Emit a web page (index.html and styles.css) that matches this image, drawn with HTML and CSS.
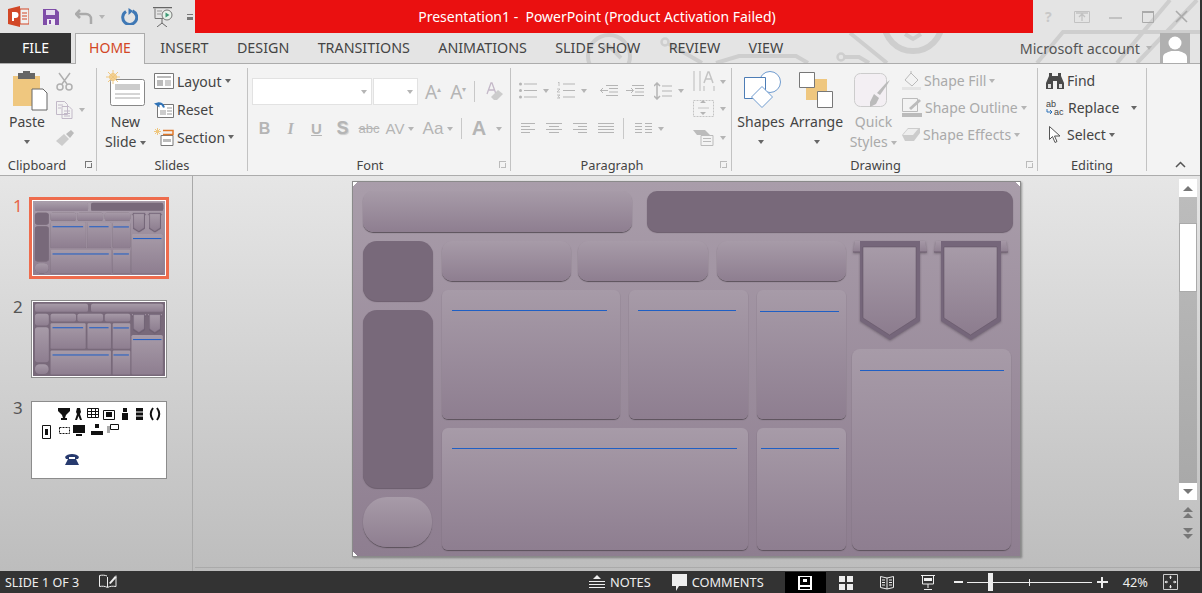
FILE: index.html
```html
<!DOCTYPE html>
<html lang="en">
<head>
  <meta charset="UTF-8" />
  <title>Presentation1 - PowerPoint</title>
  <link rel="stylesheet" href="styles.css">
</head>
<body>
  <!-- Shared shapes -->
  <svg class="defs" aria-hidden="true">
    <defs>
      <linearGradient id="bannerFill" x1="0" y1="0" x2="0" y2="1">
        <stop offset="0" stop-color="#a79ba8" />
        <stop offset="1" stop-color="#8c7c8e" />
      </linearGradient>
      <linearGradient id="earFill" x1="0" y1="0" x2="0" y2="1">
        <stop offset="0" stop-color="#a598a6" />
        <stop offset="1" stop-color="#8f8091" />
      </linearGradient>
      <symbol id="banner" viewBox="0 0 74 100">
        <path d="M2 0h70l2 11H0z" fill="url(#earFill)" />
        <path d="M0 10.500h74v1H0z" fill="#6e5f70" />
        <path d="M7 0h60v80L37 99 7 80z" fill="#75667a" />
        <path d="M10 6h53v71L36.500 94 10 77z" fill="url(#bannerFill)" stroke="#5f5161" stroke-width=".5" />
      </symbol>
    </defs>
  </svg>

  <div class="app">
    <!-- Circuit board pattern behind title bar and tabs -->
    <svg class="circuit" width="1202" height="63" viewBox="0 0 1202 63" aria-hidden="true">
      <g fill="none" stroke="#cecece" stroke-width="4">
        <circle cx="609" cy="56" r="21" />
        <path d="M601 50l7-5 13 13" />
        <circle cx="913" cy="22" r="29" stroke-width="6" />
        <path d="M905 34l8 5 8-5" />
        <circle cx="665" cy="42" r="3.500" stroke-width="2.500" />
        <path d="M669 44l33 19M716 63l23-7h57l12 7M845 57h14l10 6M850 33l37 30" />
        <circle cx="841" cy="57" r="3.500" stroke-width="2.500" />
        <path d="M1037 63l26-31h137M1117 63l53-63M1137 63l60-63" />
      </g>
    </svg>

    <!-- Title bar -->
    <header class="titlebar">
      <div class="qat">
        <svg class="qat-logo" width="21" height="21" viewBox="0 0 21 21">
          <path d="M0 3l12-3v21L0 18z" fill="#d24726" />
          <path d="M12 3h9v15h-9z" fill="#f0f0f0" stroke="#d24726" />
          <path d="M4 6h3.500a2.500 2.500 0 010 6H6v3H4z" fill="#fff" />
          <path d="M14 7h5M14 10h5M14 13h5" stroke="#d24726" />
        </svg>
        <svg class="qat-save" width="16" height="16" viewBox="0 0 16 16">
          <path d="M0 0h13l3 3v13H0z" fill="#7f4da8" />
          <path d="M3 1h9v5H3z" fill="#e5dcee" />
          <path d="M4 10h8v6H4z" fill="#efe9f4" />
          <path d="M6 11h2v4H6z" fill="#7f4da8" />
        </svg>
        <svg class="qat-undo" width="19" height="16" viewBox="0 0 19 16">
          <path d="M5 1L1 5l4 4M1 5h10a5 5 0 015 5v5" fill="none" stroke="#aaa" stroke-width="2.500" />
        </svg>
        <span class="caret caret-pale"></span>
        <svg class="qat-redo" width="17" height="17" viewBox="0 0 17 17">
          <path d="M5 3.500a7 7 0 106.500-.5" fill="none" stroke="#3f78b5" stroke-width="3" />
          <path d="M7.500 0v7L12 3z" fill="#3f78b5" />
        </svg>
        <svg class="qat-show" width="20" height="20" viewBox="0 0 20 20">
          <path d="M0 .500h19" stroke="#666" stroke-width="1.500" />
          <path d="M2 1.500v10h10" fill="none" stroke="#777" />
          <path d="M4 4h5M4 7h4" stroke="#999" />
          <circle cx="14" cy="8" r="5" fill="#e8f2ea" stroke="#777" />
          <path d="M12.500 5.500l4 2.500-4 2.500z" fill="#3d9a77" />
          <path d="M9 12v4M4 20l5-4 5 4" fill="none" stroke="#666" />
        </svg>
        <span class="qat-more"></span>
      </div>
      <div class="title-text">Presentation1 -  PowerPoint (Product Activation Failed)</div>
      <div class="window-buttons">
        <span class="win-help">?</span>
        <svg width="16" height="12" viewBox="0 0 16 12">
          <path d="M.500.500h15v11H.500z" fill="none" stroke="#c2c2c2" />
          <path d="M8 10V3M5 6l3-3 3 3M2 2h12" fill="none" stroke="#c2c2c2" stroke-width="1.300" />
        </svg>
        <svg width="13" height="3" viewBox="0 0 13 3"><path d="M0 1h13" stroke="#c2c2c2" stroke-width="2" /></svg>
        <svg width="12" height="12" viewBox="0 0 12 12">
          <path d="M.500 1.500h11v10H.500z" fill="none" stroke="#aaa" />
          <path d="M0 1h12" stroke="#aaa" stroke-width="2" />
        </svg>
        <svg width="13" height="13" viewBox="0 0 13 13"><path d="M1 1l11 11M12 1L1 12" stroke="#aaa" stroke-width="1.600" /></svg>
      </div>
    </header>

    <!-- Ribbon tabs -->
    <nav class="tabs">
      <a class="tab-file">FILE</a>
      <a class="tab tab-active">HOME</a>
      <a class="tab">INSERT</a>
      <a class="tab">DESIGN</a>
      <a class="tab">TRANSITIONS</a>
      <a class="tab">ANIMATIONS</a>
      <a class="tab">SLIDE SHOW</a>
      <a class="tab">REVIEW</a>
      <a class="tab">VIEW</a>
      <div class="account">
        <span>Microsoft account</span>
        <span class="caret caret-pale"></span>
        <svg class="avatar" width="30" height="30" viewBox="0 0 30 30">
          <path d="M0 0h30v30H0z" fill="#b0b0b0" />
          <circle cx="15" cy="10" r="6.500" fill="#fff" />
          <path d="M3 30v-6c0-4 6-5 8-6h8c2 1 8 2 8 6v6z" fill="#fff" />
        </svg>
      </div>
    </nav>

    <!-- Ribbon -->
    <section class="ribbon">
      <div class="group group-clipboard">
        <div class="group-body">
          <div class="big-button big-paste">
            <svg class="big-icon" width="35" height="40" viewBox="0 0 35 40">
              <path d="M0 5h27v30H0z" fill="#efc77f" />
              <path d="M5 2h5V0h7v2h5v6H5z" fill="#666" />
              <path d="M19 18h11l4 4v17H19z" fill="#fff" stroke="#666" />
            </svg>
            <span>Paste</span>
            <span class="caret"></span>
          </div>
          <div class="clip-tools">
            <svg width="17" height="19" viewBox="0 0 17 19">
              <path d="M3 1l8 11M14 1L6 12" stroke="#b0b0b0" stroke-width="1.500" />
              <circle cx="4" cy="15" r="3" fill="none" stroke="#b0b0b0" stroke-width="1.500" />
              <circle cx="13" cy="15" r="3" fill="none" stroke="#b0b0b0" stroke-width="1.500" />
            </svg>
            <div class="clip-copy">
              <svg width="17" height="18" viewBox="0 0 17 18">
                <path d="M.500.500h8l3 3v10H.500zM6 5.500h7l3 3v9H6z" fill="#f3f3f3" stroke="#c2b9c8" />
                <path d="M8 10h6M8 12.500h6M8 15h6M2 4h5M2 7h3" stroke="#c2b9c8" />
              </svg>
              <span class="caret caret-pale"></span>
            </div>
            <svg width="18" height="16" viewBox="0 0 18 16">
              <path d="M0 11l8-7 5 5-7 7z" fill="#ccc" />
              <path d="M10 4l5-4 3 3-4 5z" fill="#bbb" />
            </svg>
          </div>
        </div>
        <div class="group-label">Clipboard<span class="launcher launcher-dark"></span></div>
      </div>

      <div class="group group-slides">
        <div class="group-body">
          <div class="big-button big-new">
            <svg class="big-icon" width="39" height="36" viewBox="0 0 39 36">
              <rect x="4.500" y="9.500" width="34" height="26" rx="2" fill="#fff" stroke="#888" />
              <path d="M9 14h25v6H9z" fill="#ccc" />
              <path d="M9 24h25M9 28h25" stroke="#aaa" />
              <circle cx="7" cy="7" r="3.500" fill="#f7d9a4" stroke="#efc77f" />
              <path d="M7 0v14M0 7h14M2 2l10 10M12 2L2 12" stroke="#efc77f" />
            </svg>
            <span>New</span>
            <span>Slide <i class="caret"></i></span>
          </div>
          <div class="small-list small-list-wide">
            <div class="small-row">
              <svg width="20" height="16" viewBox="0 0 20 16">
                <path d="M.500.500h19v15H.500z" fill="#fff" stroke="#777" />
                <path d="M3 3h14v2H3zM3 7h6v6H3z" fill="#bbb" />
                <path d="M11 8h6M11 10h6M11 12h6" stroke="#999" />
              </svg>
              <span>Layout</span><i class="caret"></i>
            </div>
            <div class="small-row">
              <svg width="20" height="17" viewBox="0 0 20 17">
                <path d="M3.500 3.500h16v13h-16z" fill="#fff" stroke="#777" />
                <path d="M6 9h6v5H6z" fill="#ccc" />
                <path d="M13 7h5M13 10h5M13 13h5" stroke="#999" />
                <path d="M10 6.500C8 1 5 2 3.500 4" fill="none" stroke="#2f73b8" stroke-width="2" />
                <path d="M0 2.500l5.500 4V1z" fill="#2f73b8" />
              </svg>
              <span>Reset</span>
            </div>
            <div class="small-row">
              <svg width="20" height="19" viewBox="0 0 20 19">
                <path d="M7 7.500h12v10H7z" fill="#fff" stroke="#777" />
                <path d="M9 11h8v3H9z" fill="#bbb" />
                <path d="M9 2.500h10v4H9" fill="none" stroke="#e07a2c" stroke-width="1.500" />
                <path d="M3.500 0v7M0 3.500h7M1 1l5 5M6 1L1 6" stroke="#efc77f" />
              </svg>
              <span>Section</span><i class="caret"></i>
            </div>
          </div>
        </div>
        <div class="group-label">Slides</div>
      </div>

      <div class="group group-font">
        <div class="group-body group-stack">
          <div class="font-row">
            <div class="combo combo-name"><i class="caret caret-pale"></i></div>
            <div class="combo combo-size"><i class="caret caret-pale"></i></div>
            <span class="glyph glyph-grow">A<sup>▴</sup></span>
            <span class="glyph glyph-shrink">A<sup>▾</sup></span>
            <span class="tool-sep"></span>
            <svg class="font-clear" width="17" height="19" viewBox="0 0 17 19">
              <path d="M1 12L5 1h1l4 11M3 8h5" fill="none" stroke="#c4b8c8" stroke-width="1.300" />
              <path d="M5 15l7-7 5 4-6 6H8z" fill="#ccc" />
            </svg>
          </div>
          <div class="font-row font-row-two">
            <b class="fmt fmt-b">B</b>
            <i class="fmt fmt-i">I</i>
            <u class="fmt fmt-u">U</u>
            <b class="fmt fmt-s">S</b>
            <s class="fmt fmt-abc">abc</s>
            <span class="fmt fmt-av">AV</span><i class="caret caret-pale"></i>
            <span class="fmt fmt-aa">Aa</span><i class="caret caret-pale"></i>
            <span class="tool-sep tool-sep-b"></span>
            <b class="fmt fmt-a">A</b><i class="caret caret-pale caret-a"></i>
          </div>
        </div>
        <div class="group-label">Font<span class="launcher"></span></div>
      </div>

      <div class="group group-paragraph">
        <div class="group-body">
          <div class="para-left">
            <div class="para-row">
              <svg width="18" height="17" viewBox="0 0 18 17">
                <path d="M5 2h13M5 8.500h13M5 15h13" stroke="#b5b5b5" />
                <circle cx="1.500" cy="2" r="1.500" fill="#b5b5b5" /><circle cx="1.500" cy="8.500" r="1.500" fill="#b5b5b5" /><circle cx="1.500" cy="15" r="1.500" fill="#b5b5b5" />
              </svg>
              <i class="caret caret-pale"></i>
              <svg class="para-num" width="18" height="17" viewBox="0 0 18 17">
                <path d="M6 2h12M6 8.500h12M6 15h12" stroke="#b5b5b5" />
                <path d="M1 1l1-1v4M0 7h3L0 10h3M0 13h3L1 14.500 3 16H0" fill="none" stroke="#b5b5b5" stroke-width=".8" />
              </svg>
              <i class="caret caret-pale"></i>
              <svg class="para-indent" width="18" height="11" viewBox="0 0 18 11">
                <path d="M6 .500h12M9 3.500h9M9 7h9M6 10.500h12M0 5.500h8M3 3L.500 5.500 3 8" fill="none" stroke="#b5b5b5" />
              </svg>
              <svg class="para-indent2" width="18" height="11" viewBox="0 0 18 11">
                <path d="M6 .500h12M9 3.500h9M9 7h9M6 10.500h12M0 5.500h7M5 3l2.500 2.500L5 8" fill="none" stroke="#b5b5b5" />
              </svg>
              <svg class="para-spacing" width="18" height="18" viewBox="0 0 18 18">
                <path d="M3 1v16M0 4l3-3 3 3M0 14l3 3 3-3" fill="none" stroke="#b5b5b5" stroke-width="1.500" />
                <path d="M8 4h10M8 9h10M8 14h10" stroke="#b5b5b5" />
              </svg>
              <i class="caret caret-pale"></i>
            </div>
            <div class="para-row para-row-two">
              <svg width="14" height="11" viewBox="0 0 14 11"><path d="M0 .500h14M0 3.500h9M0 6.500h14M0 9.500h9" stroke="#b5b5b5" /></svg>
              <svg width="16" height="11" viewBox="0 0 16 11"><path d="M0 .500h16M3 3.500h10M0 6.500h16M3 9.500h10" stroke="#b5b5b5" /></svg>
              <svg width="14" height="11" viewBox="0 0 14 11"><path d="M0 .500h14M5 3.500h9M0 6.500h14M5 9.500h9" stroke="#b5b5b5" /></svg>
              <svg width="16" height="11" viewBox="0 0 16 11"><path d="M0 .500h16M0 3.500h16M0 6.500h16M0 9.500h16" stroke="#b5b5b5" /></svg>
              <span class="tool-sep tool-sep-p"></span>
              <svg width="17" height="11" viewBox="0 0 17 11"><path d="M0 .500h7M0 3.500h7M0 6.500h7M0 9.500h7M10 .500h7M10 3.500h7M10 6.500h7M10 9.500h7" stroke="#b5b5b5" /></svg>
              <i class="caret caret-pale"></i>
            </div>
          </div>
          <div class="para-right">
            <div class="para-cell">
              <svg width="27" height="21" viewBox="0 0 27 21">
                <path d="M1 0v20M7 0v20M11 15v5M21 15v5" stroke="#bbb" />
                <path d="M11 12l4-11h1l4 11M12.500 8h6" fill="none" stroke="#c4c4c4" stroke-width="1.500" />
              </svg>
              <i class="caret caret-pale"></i>
            </div>
            <div class="para-cell">
              <svg width="27" height="17" viewBox="0 0 27 17">
                <path d="M.500.500h20v16H.500z" fill="none" stroke="#c4c4c4" stroke-dasharray="2 1" />
                <path d="M5 8h11" stroke="#c4c4c4" /><path d="M7 3l3-3 3 3zM7 12l3 3 3-3z" fill="#b5b5b5" />
              </svg>
              <i class="caret caret-pale"></i>
            </div>
            <div class="para-cell">
              <svg width="27" height="16" viewBox="0 0 27 16">
                <path d="M0 0h12l5 5H4z" fill="#bbb" />
                <path d="M8 5.500h12v10H8z" fill="#f3f3f3" stroke="#bbb" />
                <path d="M10 8.500h8M10 11.500h8" stroke="#bbb" />
              </svg>
              <i class="caret caret-pale"></i>
            </div>
          </div>
        </div>
        <div class="group-label">Paragraph<span class="launcher"></span></div>
      </div>

      <div class="group group-drawing">
        <div class="group-body">
          <div class="big-button big-shapes">
            <svg class="big-icon" width="38" height="37" viewBox="0 0 38 37">
              <circle cx="26" cy="11" r="10.500" fill="#fff" stroke="#6f9bcf" />
              <path d="M.500 6.500h21v21H.500z" fill="#fff" stroke="#4d7db6" />
              <path d="M18 15.500l10.500 10.500L18 36.500 7.500 26z" fill="#fff" stroke="#6f9bcf" />
            </svg>
            <span>Shapes</span>
            <span class="caret"></span>
          </div>
          <div class="big-button big-arrange">
            <svg class="big-icon" width="36" height="36" viewBox="0 0 36 36">
              <path d="M7 7h21v21H7z" fill="#efc77f" />
              <path d="M.500.500h15v15H.500zM18.500 19.500h15v16h-15z" fill="#fff" stroke="#777" />
            </svg>
            <span>Arrange</span>
            <span class="caret"></span>
          </div>
          <div class="big-button big-quick big-off">
            <svg class="big-icon" width="40" height="37" viewBox="0 0 40 37">
              <rect x=".500" y=".500" width="32" height="33" rx="6" fill="#f3eff3" stroke="#ccc" />
              <path d="M16 29l4-8 5 4-3 6-6 3z" fill="#bbb" />
              <path d="M23 20l9-10 4-3-3 5-7 10z" fill="#bbb" />
            </svg>
            <span>Quick</span>
            <span>Styles <i class="caret caret-pale"></i></span>
          </div>
          <div class="small-list small-list-off">
            <div class="small-row">
              <svg width="19" height="19" viewBox="0 0 19 19">
                <path d="M3 9l6-7 7 7-6 6z" fill="#f3f3f3" stroke="#bbb" />
                <path d="M9 2V0" stroke="#bbb" /><path d="M0 16h19v3H0z" fill="#e4e4e4" />
              </svg>
              <span>Shape Fill</span><i class="caret caret-pale"></i>
            </div>
            <div class="small-row">
              <svg width="20" height="19" viewBox="0 0 20 19">
                <path d="M.500.500h15v13H.500z" fill="#f3f3f3" stroke="#bbb" />
                <path d="M7 10L17 1l2 2-10 9z" fill="#bbb" /><path d="M0 15h20v4H0z" fill="#bbb" />
              </svg>
              <span>Shape Outline</span><i class="caret caret-pale"></i>
            </div>
            <div class="small-row">
              <svg width="18" height="15" viewBox="0 0 18 15">
                <path d="M0 8l6-7h12v5l-6 8H3z" fill="#ccc" /><path d="M1 8l5-6h10l-5 6z" fill="#eee" />
              </svg>
              <span>Shape Effects</span><i class="caret caret-pale"></i>
            </div>
          </div>
        </div>
        <div class="group-label">Drawing<span class="launcher"></span></div>
      </div>

      <div class="group group-editing">
        <div class="group-body">
          <div class="small-list">
            <div class="small-row">
              <svg width="18" height="16" viewBox="0 0 18 16">
                <path d="M3 0h3v3h6V0h3v3l3 7v6h-7V8H7v8H0v-6l3-7z" fill="#4a4a4a" />
                <path d="M2 11h3v4H2zM13 11h3v4h-3z" fill="#ddd" />
              </svg>
              <span>Find</span>
            </div>
            <div class="small-row">
              <svg width="19" height="16" viewBox="0 0 19 16">
                <text x="0" y="7" class="replace-ab">ab</text>
                <text x="8" y="15" class="replace-ac">ac</text>
                <path d="M1 9v3h5M4 10l2 2-2 2" fill="none" stroke="#2f73b8" />
              </svg>
              <span>Replace</span><i class="caret caret-replace"></i>
            </div>
            <div class="small-row">
              <svg class="select-icon" width="12" height="17" viewBox="0 0 12 17">
                <path d="M.500.500v13l3-3 2.500 6 2-1-2.500-5.500H11z" fill="#fff" stroke="#555" />
              </svg>
              <span>Select</span><i class="caret"></i>
            </div>
          </div>
        </div>
        <div class="group-label">Editing</div>
      </div>

      <svg class="ribbon-collapse" width="11" height="7" viewBox="0 0 11 7"><path d="M1 6l4.500-4.500L10 6" fill="none" stroke="#555" stroke-width="1.500" /></svg>
    </section>

    <main class="workspace">
      <!-- Slide thumbnails -->
      <aside class="thumbs">
        <div class="thumb-row thumb-current">
          <span class="thumb-num">1</span>
          <div class="thumb-frame">
            <div class="thumb-view">
              <div class="slide">
                <div class="shape top-a"></div><div class="shape dark top-b"></div>
                <div class="shape dark side-a"></div><div class="shape dark side-b"></div><div class="shape pill"></div>
                <div class="shape head-a"></div><div class="shape head-b"></div><div class="shape head-c"></div>
                <div class="shape card-a"><hr></div><div class="shape card-b"><hr></div><div class="shape card-c"><hr></div>
                <div class="shape card-d"><hr></div><div class="shape card-e"><hr></div><div class="shape card-f"><hr></div>
                <svg class="banner banner-a"><use href="#banner" /></svg><svg class="banner banner-b"><use href="#banner" /></svg>
              </div>
            </div>
          </div>
        </div>
        <div class="thumb-row">
          <span class="thumb-num">2</span>
          <div class="thumb-frame">
            <div class="thumb-view">
              <div class="slide slide-alt">
                <div class="shape top-a"></div><div class="shape top-b"></div>
                <div class="shape side-a"></div><div class="shape side-b"></div><div class="shape pill"></div>
                <div class="shape head-a"></div><div class="shape head-b"></div><div class="shape head-c"></div>
                <div class="shape card-a"><hr></div><div class="shape card-b"><hr></div><div class="shape card-c"><hr></div>
                <div class="shape card-d"><hr></div><div class="shape card-e"><hr></div><div class="shape card-f"><hr></div>
                <svg class="banner banner-a"><use href="#banner" /></svg><svg class="banner banner-b"><use href="#banner" /></svg>
              </div>
            </div>
          </div>
        </div>
        <div class="thumb-row">
          <span class="thumb-num">3</span>
          <div class="thumb-frame">
            <svg class="thumb-icons" width="134" height="76" viewBox="0 0 134 76">
              <g fill="#111">
                <path d="M26 6h12v3l-4 4-1 3h2v2h-6v-2h2l-1-3-4-4z" />
                <path d="M45 6h3l1 4-1 2 2 6-2 0-1.500-4-1.500 4-2 0 2-6-1-2z" />
                <path d="M55.500 6.500h11v9h-11z" fill="#fff" stroke="#111" /><path d="M55 9.500h11M55 12.500h11M59.500 6v9M63.500 6v9" stroke="#111" />
                <path d="M71.500 8.500h11v9h-11z" fill="#fff" stroke="#111" /><path d="M74 10h6v5h-6z" />
                <path d="M90 11h6v7h-6zM91 6h4v4h-4z" />
                <path d="M104 6h7v12h-7z" /><path d="M104 10h7M104 14h7" stroke="#fff" />
                <path d="M121 6c-3 4-3 8 0 12M125 6c3 4 3 8 0 12" fill="none" stroke="#111" stroke-width="2" />
                <path d="M10.500 23.500h8v13h-8z" fill="#fff" stroke="#111" /><path d="M13 27h3v6h-3z" />
                <path d="M27.500 25.500h10v6h-10z" fill="#fff" stroke="#111" stroke-dasharray="2 1" />
                <path d="M41 23h12v8H41zM44 32h6v2h-6z" />
                <path d="M63 22h4v4h-4zM59 29h4v4h-4zM63 29h4v4h-4zM67 29h4v4h-4z" />
                <path d="M78.500 22.500h8v5h-8z" fill="#fff" stroke="#111" /><path d="M75 24h3v7h-3z" fill="#aaa" />
                <path d="M33 55c2-4 12-4 14 0l-1 2h-3v-2h-6v2h-3zM36 57h8l3 6H33z" fill="#273a6e" />
              </g>
            </svg>
          </div>
        </div>
      </aside>

      <div class="stage">
        <div class="canvas">
          <div class="slide">
            <div class="shape top-a"></div><div class="shape dark top-b"></div>
            <div class="shape dark side-a"></div><div class="shape dark side-b"></div><div class="shape pill"></div>
            <div class="shape head-a"></div><div class="shape head-b"></div><div class="shape head-c"></div>
            <div class="shape card-a"><hr></div><div class="shape card-b"><hr></div><div class="shape card-c"><hr></div>
            <div class="shape card-d"><hr></div><div class="shape card-e"><hr></div><div class="shape card-f"><hr></div>
            <svg class="banner banner-a"><use href="#banner" /></svg><svg class="banner banner-b"><use href="#banner" /></svg>
          </div>
        </div>

        <div class="scrollbar">
          <div class="scroll-btn"><span class="arrow-up"></span></div>
          <div class="scroll-track">
            <div class="scroll-thumb"></div>
          </div>
          <div class="scroll-btn scroll-btn-down"><span class="arrow-down"></span></div>
          <div class="scroll-page">
            <span class="arrow-up"></span><span class="arrow-up arrow-tuck"></span>
          </div>
          <div class="scroll-page">
            <span class="arrow-down"></span><span class="arrow-down arrow-tuck"></span>
          </div>
        </div>
      </div>
    </main>

    <!-- Status bar -->
    <footer class="statusbar">
      <span class="status-count">SLIDE 1 OF 3</span>
      <svg class="status-spell" width="18" height="16" viewBox="0 0 18 16">
        <path d="M8 2C6 1 3 1 .500 1.500v11C3 12 6 12 8.500 13.500 11 12 14 12 17 12.500V1.500" fill="none" stroke="#eee" />
        <path d="M8.500 3v10" stroke="#eee" /><path d="M10 9l6-7 1.500 1.500-6 6.500z" fill="#eee" />
      </svg>
      <div class="status-right">
        <span class="status-item">
          <svg width="16" height="14" viewBox="0 0 16 14">
            <path d="M8 0l4 4H4z" fill="#eee" /><path d="M0 6.500h16M0 9.500h16M0 12.500h16" stroke="#eee" />
          </svg>NOTES</span>
        <span class="status-item status-comments">
          <svg width="15" height="17" viewBox="0 0 15 17"><path d="M0 0h15v12H7l-3 5v-5H0z" fill="#eee" /></svg>COMMENTS</span>
        <span class="view-btn view-active">
          <svg width="14" height="14" viewBox="0 0 14 14"><path fill-rule="evenodd" d="M0 0h14v14H0zM2 1v8h10V1zM2 11v2h10v-2z" fill="#fff" /><path d="M5 3h4v3H5z" fill="#fff" /></svg>
        </span>
        <span class="view-btn">
          <svg width="14" height="14" viewBox="0 0 14 14"><path d="M0 0h6v6H0zM8 0h6v6H8zM0 8h6v6H0zM8 8h6v6H8z" fill="#eee" /></svg>
        </span>
        <span class="view-btn">
          <svg width="14" height="15" viewBox="0 0 14 15"><path d="M.500 1.500L7 3l6.500-1.500v11L7 14 .500 12.500z" fill="none" stroke="#eee" /><path d="M7 3v11M2 5h3M2 7.500h3M2 10h3M9 5h3M9 7.500h3M9 10h3" stroke="#eee" /></svg>
        </span>
        <span class="view-btn">
          <svg width="14" height="15" viewBox="0 0 14 15"><path d="M0 .500h14M1.500 1v8h11V1M7 9v4M3 14.500h8" fill="none" stroke="#eee" /><path d="M3 3h8v3H3z" fill="#eee" /></svg>
        </span>
        <span class="zoom-minus"></span>
        <div class="zoom-slider"><span class="zoom-tick"></span><span class="zoom-knob"></span></div>
        <span class="zoom-plus"></span>
        <span class="zoom-value">42%</span>
        <svg class="zoom-fit" width="15" height="16" viewBox="0 0 15 16">
          <path d="M.500.500h14v15H.500z" fill="none" stroke="#ccc" />
          <path d="M7.500 2v3M7.500 11v3M2 8h3M10 8h3" stroke="#eee" />
          <path d="M6 3.500l1.500-2 1.500 2zM6 12.500l1.500 2 1.500-2zM3.500 6.500l-2 1.500 2 1.500zM11.500 6.500l2 1.500-2 1.500z" fill="#eee" />
        </svg>
      </div>
    </footer>
  </div>
</body>
</html>
```
FILE: styles.css
```css
/* Reset */
* {
  box-sizing: border-box;
  margin: 0;
  padding: 0;
}

body {
  width: 1202px;
  height: 593px;
  overflow: hidden;
  font-family: "Noto Sans", "Open Sans", sans-serif;
  font-size: 14px;
  color: #444;
  background: #e4e4e4;
}

.defs {
  position: absolute;
  width: 0;
  height: 0;
}

.app {
  position: relative;
  display: flex;
  flex-direction: column;
  height: 593px;
  border-right: 2px solid #333;
  background: #e4e4e4;
}

.circuit {
  position: absolute;
  top: 0;
  left: 0;
}

/* Shared bits */
.caret {
  display: inline-block;
  width: 0;
  height: 0;
  border-left: 3.5px solid transparent;
  border-right: 3.5px solid transparent;
  border-top: 4px solid #666;
  vertical-align: middle;
}

.caret-pale {
  border-top-color: #b5b5b5;
}

svg {
  display: block;
  flex: none;
}

/* Title bar */
.titlebar {
  position: relative;
  display: flex;
  height: 33px;
}

.qat {
  display: flex;
  align-items: center;
  width: 195px;
  padding-left: 8px;
}

.qat-save {
  margin-left: 14px;
}

.qat-undo {
  margin-left: 16px;
}

.qat .caret {
  margin-left: 5px;
  border-left-width: 3px;
  border-right-width: 3px;
}

.qat-redo {
  margin-left: 16px;
}

.qat-show {
  margin-left: 15px;
}

.qat-more {
  width: 6px;
  height: 6px;
  margin-left: 14px;
  border-top: 1px solid #777;
  border-bottom: 3px solid #777;
}

.title-text {
  flex: 0 0 838px;
  padding-top: 6px;
  padding-right: 34px;
  background: #ea1010;
  color: #fff;
  font-size: 14px;
  line-height: 21px;
  text-align: center;
  white-space: pre;
}

.window-buttons {
  display: flex;
  align-items: center;
  height: 33px;
  padding-left: 12px;
}

.window-buttons svg:nth-child(2) {
  margin-left: 22px;
}

.window-buttons svg:nth-child(3) {
  margin-left: 19px;
  margin-top: 4px;
}

.window-buttons svg:nth-child(4) {
  margin-left: 20px;
}

.window-buttons svg:nth-child(5) {
  margin-left: 21px;
}

.win-help {
  color: #c8c8c8;
  font-size: 14px;
  font-weight: 700;
}

/* Tabs */
.tabs {
  position: relative;
  display: flex;
  align-items: stretch;
  height: 31px;
  border-bottom: 1px solid #acacac;
  font-size: 14.3px;
}

.tab-file {
  width: 71px;
  margin-right: 4px;
  background: #333;
  color: #fff;
  font-size: 14px;
  line-height: 30px;
  text-align: center;
}

.tab {
  padding: 0 14.2px;
  color: #444;
  line-height: 30px;
}

.tab-active {
  width: 70px;
  height: 31px;
  padding: 0;
  margin-right: 1px;
  border: 1px solid #acacac;
  border-bottom: 0;
  background: #f3f3f3;
  color: #d24726;
  font-size: 14px;
  line-height: 28px;
  text-align: center;
}

.account {
  display: flex;
  align-items: center;
  gap: 6px;
  margin-left: auto;
  margin-right: 10px;
  color: #555;
}

.avatar {
  align-self: flex-end;
  margin-left: 2px;
}

/* Ribbon */
.ribbon {
  position: relative;
  display: flex;
  height: 112px;
  padding-top: 4px;
  border-bottom: 1px solid #acacac;
  background: #f3f3f3;
}

.group {
  position: relative;
  display: flex;
  flex-direction: column;
  height: 103px;
  border-right: 1px solid #c2c2c2;
}

.group-clipboard { width: 97px; }
.group-slides { width: 151px; }
.group-font { width: 263px; }
.group-paragraph { width: 221px; }
.group-drawing { width: 306px; }
.group-editing { width: 109px; }

.group-body {
  display: flex;
  flex: 1;
  min-height: 0;
}

.group-stack {
  flex-direction: column;
}

.group-label {
  position: relative;
  top: 1px;
  height: 14px;
  font-size: 12.8px;
  line-height: 14px;
  text-align: center;
}

.group-clipboard .group-label {
  padding-right: 22px;
}

.group-font .group-label,
.group-paragraph .group-label,
.group-drawing .group-label {
  padding-right: 18px;
}

.launcher {
  position: absolute;
  right: 4px;
  top: 3px;
  width: 7px;
  height: 7px;
  border: 1px solid #bbb;
  border-width: 1px 0 0 1px;
}

.launcher::after {
  content: "";
  position: absolute;
  right: 0;
  bottom: 0;
  width: 4px;
  height: 4px;
  border-right: 1px solid #bbb;
  border-bottom: 1px solid #bbb;
}

.launcher-dark,
.launcher-dark::after {
  border-color: #777;
}

.big-button {
  display: flex;
  flex-direction: column;
  align-items: center;
  line-height: 20px;
}

.big-paste {
  width: 54px;
  padding-top: 3px;
}

.big-paste .big-icon {
  margin-left: 6px;
}

.big-paste span:first-of-type {
  margin-top: 1px;
}

.big-new {
  width: 57px;
  padding-top: 2px;
}

.big-new span:first-of-type {
  margin-top: 6px;
}

.big-shapes {
  width: 58px;
  padding-top: 3px;
}

.big-shapes .big-icon {
  margin-left: 4px;
}

.big-shapes span:first-of-type {
  margin-top: 4px;
}

.big-arrange {
  width: 53px;
  padding-top: 4px;
}

.big-arrange span:first-of-type {
  margin-top: 4px;
}

.big-quick {
  width: 57px;
  margin-left: 2px;
  padding-top: 5px;
}

.big-quick span:first-of-type {
  margin-top: 2px;
}

.big-off {
  color: #aaa;
}

.big-button > .caret {
  margin-top: 8px;
}

.clip-tools {
  display: flex;
  flex-direction: column;
  gap: 10px;
  padding-top: 4px;
  padding-left: 2px;
}

.clip-copy {
  display: flex;
  align-items: center;
  gap: 6px;
}

.clip-tools svg:last-child {
  margin-top: 1px;
}

.small-list {
  display: flex;
  flex-direction: column;
  margin-top: -1px;
}

.small-row {
  display: flex;
  align-items: center;
  height: 27px;
  gap: 3px;
}

.small-list-wide .small-row {
  height: 28px;
}

.small-list-off {
  color: #aaa;
}

/* Font group */
.font-row {
  display: flex;
  align-items: center;
  height: 27px;
  margin-top: 10px;
  padding-left: 4px;
  color: #b5b5b5;
}

.combo {
  display: flex;
  align-items: center;
  justify-content: flex-end;
  height: 27px;
  padding-right: 4px;
  border: 1px solid #e2e2e2;
  background: #fff;
}

.combo-name {
  width: 120px;
}

.combo-size {
  width: 45px;
  margin-left: 1px;
}

.glyph {
  font-size: 19px;
  line-height: 20px;
}

.glyph sup {
  font-size: 8px;
  line-height: 0;
}

.glyph-grow {
  margin-left: 7px;
}

.glyph-shrink {
  margin-left: 9px;
}

.tool-sep {
  width: 1px;
  height: 21px;
  margin-left: 8px;
  background: #c8c8c8;
}

.font-clear {
  margin-left: 11px;
}

.fmt {
  text-align: center;
  font-size: 14px;
  font-family: "Liberation Sans", sans-serif;
}

.fmt-b { width: 25px; font-size: 16px; }
.fmt-i { width: 27px; font-size: 16px; font-family: "Liberation Serif", serif; font-weight: 700; }
.fmt-u { width: 25px; font-size: 15px; font-weight: 700; }
.fmt-s { width: 27px; font-size: 18px; text-shadow: 1px 1px 1px #ccc; }
.fmt-abc { width: 26px; font-size: 13px; }
.fmt-av { width: 26px; font-size: 15px; }
.fmt-aa { width: 28px; margin-left: 5px; font-size: 17px; }
.fmt-a { width: 24px; margin-left: 5px; font-size: 20px; }

.tool-sep-b {
  margin-left: 8px;
}

.caret-a {
  margin-left: 5px;
}

/* Paragraph group */
.para-left {
  width: 178px;
  padding-left: 8px;
}

.para-row {
  display: flex;
  align-items: center;
  height: 27px;
  margin-top: 9px;
}

.para-row .caret {
  margin-left: 6px;
}

.para-num {
  margin-left: 8px;
}

.para-indent {
  margin-left: 13px;
}

.para-indent2 {
  margin-left: 8px;
}

.para-spacing {
  margin-left: 10px;
}

.para-row-two {
  margin-top: 11px;
  padding-left: 2px;
  gap: 11px;
}

.para-row-two .caret {
  margin-left: -5px;
}

.tool-sep-p {
  margin-left: -2px;
}

.para-right {
  display: flex;
  flex-direction: column;
  padding-left: 4px;
  padding-top: 3px;
  gap: 6px;
}

.para-cell {
  display: flex;
  align-items: center;
  gap: 0;
  height: 21px;
}

.para-cell:last-child {
  margin-top: 2px;
}

/* Drawing & editing */
.caret-replace {
  margin-left: 9px;
}

.group-editing .small-list {
  padding-left: 8px;
}

.select-icon {
  margin-left: 3px;
  margin-right: 3px;
}

.replace-ab,
.replace-ac {
  font-size: 9px;
  font-family: "Liberation Sans", sans-serif;
  fill: #444;
}

.ribbon-collapse {
  position: absolute;
  right: 14px;
  bottom: 7px;
}

/* Workspace */
.workspace {
  display: flex;
  flex: 1;
  min-height: 0;
  background: linear-gradient(#e6e6e6, #bdbdbd);
}

.thumbs {
  display: flex;
  flex-direction: column;
  gap: 19px;
  width: 193px;
  padding-top: 21px;
  padding-left: 13px;
  border-right: 1px solid #a9a9a9;
}

.thumb-row {
  display: flex;
  height: 82px;
}

.thumb-num {
  width: 16px;
  margin-top: -3px;
  font-size: 17px;
  line-height: 24px;
  color: #555;
}

.thumb-current .thumb-num {
  color: #e8664a;
}

.thumb-frame {
  width: 136px;
  height: 78px;
  margin: 2px;
  padding: 1px;
  border: 1px solid #8c8c8c;
  background: #fff;
}

.thumb-current .thumb-frame {
  width: 140px;
  height: 82px;
  margin: 0;
  border: 3px solid #ee6c4d;
}

.thumb-view {
  width: 132px;
  height: 74px;
  overflow: hidden;
}

.thumb-view .slide {
  border: 0;
  box-shadow: none;
  transform: scale(.1973);
  transform-origin: 0 0;
}

.thumb-icons {
  margin: -1px;
}

.stage {
  display: flex;
  flex: 1;
  min-width: 0;
  height: 392px;
  border-bottom: 1px solid #aaa;
  margin-left: 2px;
}

.canvas {
  flex: 1;
  padding: 5px 0 0 157px;
}

/* Slide: a free canvas, shapes sit at their drawn places */
.slide {
  position: relative;
  width: 669px;
  height: 376px;
  border: 1px solid #8a8a8a;
  box-shadow: 1px 1px 2px rgba(0,0,0,.35);
  background:
    linear-gradient(135deg, #fff 3px, transparent 3px),
    linear-gradient(225deg, #fff 3px, transparent 3px),
    linear-gradient(45deg, #fff 3px, transparent 3px),
    linear-gradient(#a99daa, #8e7e90);
}

.shape {
  position: absolute;
  border-radius: 10px;
  background: linear-gradient(#a79ba8, #8e7e90);
  box-shadow: 0 1px 1px #5a505a;
}

.shape.dark {
  background: #78697a;
  box-shadow: 0 1px 1px #6b5d6c;
}

.shape hr {
  position: absolute;
  height: 1px;
  border: 0;
  background: #1f5fc4;
}

.thumb-view .shape hr {
  height: 5px;
  background: #1a5cc8;
}

.top-a { left: 10px; top: 9px; width: 269px; height: 41px; }
.top-b { left: 294px; top: 9px; width: 366px; height: 41px; }
.side-a { left: 10px; top: 59px; width: 70px; height: 60px; border-radius: 14px; }
.side-b { left: 10px; top: 128px; width: 70px; height: 178px; border-radius: 14px; }
.pill { left: 10px; top: 315px; width: 69px; height: 50px; border-radius: 24px; }
.head-a { left: 89px; top: 59px; width: 129px; height: 40px; }
.head-b { left: 225px; top: 59px; width: 130px; height: 40px; }
.head-c { left: 364px; top: 59px; width: 129px; height: 40px; }
.card-a { left: 89px; top: 108px; width: 178px; height: 129px; border-radius: 6px; }
.card-b { left: 276px; top: 108px; width: 119px; height: 129px; border-radius: 6px; }
.card-c { left: 404px; top: 108px; width: 89px; height: 129px; border-radius: 6px; }
.card-d { left: 89px; top: 246px; width: 306px; height: 122px; border-radius: 6px; }
.card-e { left: 404px; top: 246px; width: 89px; height: 122px; border-radius: 6px; }
.card-f { left: 499px; top: 167px; width: 159px; height: 201px; border-radius: 8px; }

.card-a hr { left: 10px; top: 20px; width: 155px; }
.card-b hr { left: 9px; top: 20px; width: 98px; }
.card-c hr { left: 3px; top: 21px; width: 79px; }
.card-d hr { left: 10px; top: 20px; width: 285px; }
.card-e hr { left: 4px; top: 20px; width: 78px; }
.card-f hr { left: 8px; top: 21px; width: 144px; }

.banner {
  position: absolute;
  top: 59px;
  width: 74px;
  height: 100px;
  filter: drop-shadow(0 1px 1px rgba(70,60,70,.5));
}

.banner-a { left: 500px; }
.banner-b { left: 581px; }

/* Second slide has the colours the other way round */
.slide-alt {
  background: #78697a;
}

.slide-alt .shape {
  box-shadow: none;
}

/* Scrollbar */
.scrollbar {
  display: flex;
  flex-direction: column;
  width: 18px;
  margin: 3px 3px 0 0;
}

.scroll-btn {
  display: flex;
  align-items: center;
  justify-content: center;
  height: 18px;
  background: #fff;
}

.scroll-btn-down {
  height: 17px;
}

.scroll-track {
  height: 286px;
  padding-top: 26px;
  background: linear-gradient(#bcbcbc, #a9a9a9);
}

.scroll-thumb {
  height: 69px;
  border: 1px solid #aaa;
  background: #fff;
}

.scroll-page {
  display: flex;
  flex-direction: column;
  align-items: center;
  margin-top: 7px;
  height: 14px;
}

.arrow-up {
  width: 0;
  height: 0;
  border-left: 5px solid transparent;
  border-right: 5px solid transparent;
  border-bottom: 5px solid #777;
}

.arrow-down {
  width: 0;
  height: 0;
  border-left: 5px solid transparent;
  border-right: 5px solid transparent;
  border-top: 5px solid #777;
}

.arrow-tuck {
  margin-top: 1px;
}

/* Status bar */
.statusbar {
  display: flex;
  align-items: center;
  height: 22px;
  background: #333;
  color: #eee;
  font-size: 12.5px;
}

.status-count {
  margin-left: 5px;
}

.status-spell {
  margin-left: 20px;
}

.status-right {
  display: flex;
  align-items: center;
  height: 22px;
  margin-left: auto;
  font-size: 12.8px;
}

.status-item {
  display: flex;
  align-items: center;
  gap: 5px;
}

.status-comments {
  margin-left: 21px;
}

.view-btn {
  display: flex;
  align-items: center;
  justify-content: center;
  width: 41px;
  height: 21px;
  margin-top: 1px;
}

.view-active {
  margin-left: 21px;
  background: #000;
}

.zoom-minus {
  width: 9px;
  height: 2px;
  margin-left: 5px;
  background: #eee;
}

.zoom-slider {
  position: relative;
  width: 125px;
  height: 1px;
  margin-left: 4px;
  background: #eee;
}

.zoom-tick {
  position: absolute;
  left: 62px;
  top: -3px;
  width: 1px;
  height: 7px;
  background: #eee;
}

.zoom-knob {
  position: absolute;
  left: 21px;
  top: -9px;
  width: 5px;
  height: 18px;
  background: #eee;
}

.zoom-plus {
  position: relative;
  width: 11px;
  height: 2px;
  margin-left: 5px;
  background: #eee;
}

.zoom-plus::after {
  content: "";
  position: absolute;
  left: 4.5px;
  top: -4.5px;
  width: 2px;
  height: 11px;
  background: #eee;
}

.zoom-value {
  margin-left: 15px;
}

.zoom-fit {
  margin-left: 15px;
  margin-right: 22px;
}
```
